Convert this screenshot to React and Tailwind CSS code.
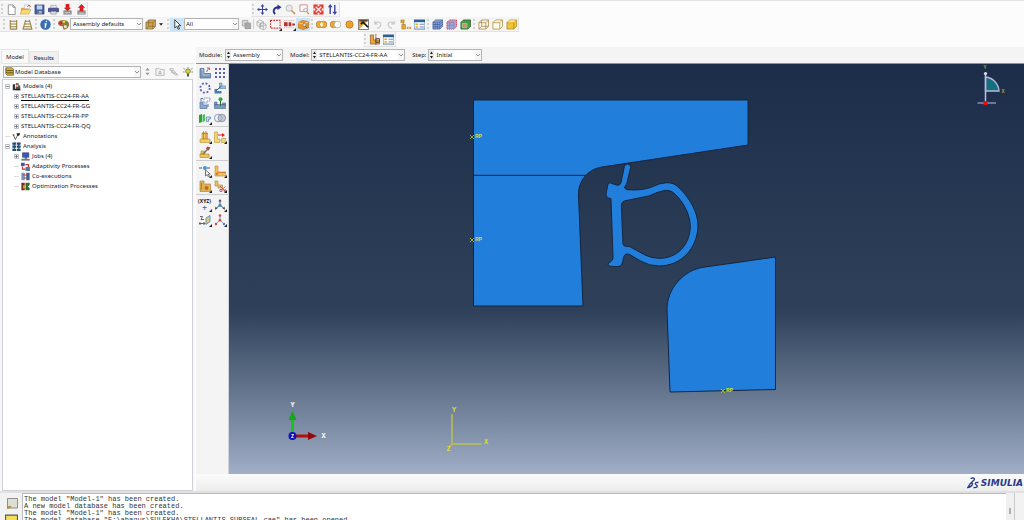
import { useState } from 'react';
import clsx from 'clsx';

const MODELS = ['STELLANTIS-CC24-FR-AA', 'STELLANTIS-CC24-FR-GG', 'STELLANTIS-CC24-FR-PP', 'STELLANTIS-CC24-FR-QQ'];

const MESSAGES = [
  'The model "Model-1" has been created.',
  'A new model database has been created.',
  'The model "Model-1" has been created.',
  'The model database "E:\\abaqus\\SULEKHA\\STELLANTIS SUBSEAL.cae" has been opened.',
];

// All glyphs are drawn on a 12x12 grid
const GLYPHS = {
  new: <path d="M2.5 1h5l2.5 2.5v8H2.5zM7.5 1v2.5H10" fill="#fff" stroke="#777" strokeWidth=".8" />,
  open: (
    <>
      <path d="M1 10V4h3l1 1h4v5z" fill="#e8a93a" />
      <path d="M0 11l2.5-5H12l-2.5 5z" fill="#ffd66b" stroke="#c98a22" strokeWidth=".5" />
      <path d="M5 1h5v4H5z" fill="#fff" stroke="#999" strokeWidth=".5" />
      <path d="M8 3l2-2 1.5 2" fill="none" stroke="#d33" />
    </>
  ),
  save: (
    <>
      <path d="M1 1h10v10H1z" fill="#3f5f9e" stroke="#2b4377" strokeWidth=".6" />
      <path d="M3 1.500h6V6H3z" fill="#c5d3ea" />
      <path d="M3.500 7.500h5v3h-5z" fill="#aab4c4" />
      <path d="M4.500 8v2" stroke="#222" />
    </>
  ),
  print: (
    <>
      <path d="M3 1.500h6V5H3z" fill="#e9ecf4" stroke="#777" strokeWidth=".5" />
      <rect x="0" y="4" width="12" height="5" rx="1" fill="#55588f" />
      <path d="M3 8h6v3H3z" fill="#dfe3f0" stroke="#666" strokeWidth=".5" />
    </>
  ),
  dbDown: (
    <>
      <path d="M1.500 7h9v4.500h-9z" fill="#8b8d92" />
      <path d="M3 9.500h6" stroke="#ddd" />
      <path d="M4 0h4v4h2L6 8 2 4h2z" fill="#d81e1e" />
    </>
  ),
  dbUp: (
    <>
      <path d="M1.500 7h9v4.500h-9z" fill="#8b8d92" />
      <path d="M3 10h6" stroke="#ddd" />
      <path d="M4 8h4V4h2L6 0 2 4h2z" fill="#d81e1e" />
    </>
  ),
  pan: (
    <>
      <path d="M6 2v8M2 6h8" stroke="#3a4299" strokeWidth="1.200" />
      <path d="M6 0l2 2.600H4zM6 12l2-2.600H4zM0 6l2.600-2v4zM12 6L9.400 4v4z" fill="#3a4299" />
    </>
  ),
  rotate: (
    <>
      <path d="M4.500 11C1.500 8 3 3.500 8 3.500" fill="none" stroke="#26308f" strokeWidth="2" />
      <path d="M7 .5l4.500 3L7 6.500z" fill="#26308f" />
    </>
  ),
  zoom: (
    <>
      <circle cx="4.500" cy="4.500" r="3.400" fill="#e9e9ea" stroke="#b9b9b9" />
      <path d="M7 7l4 4" stroke="#c98c35" strokeWidth="1.500" />
    </>
  ),
  zoomBox: (
    <>
      <path d="M1 1h8v7H1z" fill="#fff" stroke="#d06a62" strokeWidth=".8" />
      <circle cx="7" cy="6.500" r="2" fill="#eee" stroke="#999" strokeWidth=".7" />
      <path d="M8.500 8.500L11 11" stroke="#c98c35" strokeWidth="1.200" />
    </>
  ),
  fit: (
    <>
      <path d="M.5.5h11v11H.5z" fill="#e23a34" />
      <path d="M3 3l6 6M9 3L3 9" stroke="#fff" strokeWidth="1.300" />
      <path d="M5 .5h2v2H5zM5 9.500h2v2H5zM.5 5h2v2h-2zM9.500 5h2v2h-2z" fill="#fff" />
    </>
  ),
  cycle: (
    <>
      <path d="M3.500 2v9M8.500 1v9" stroke="#3a4299" strokeWidth="1.500" />
      <path d="M3.500 0L6 3.500H1zM8.500 12L6 8.500h5z" fill="#3a4299" />
    </>
  ),
  parallel: <path d="M2.500 1v10.500M9.500 1v10.500M2.500 2.500h7M2.500 5.500h7M2.500 8.500h7M2.500 11h7" fill="none" stroke="#9a8446" strokeWidth="1.200" />,
  perspective: <path d="M4 1L1 11.500M8 1l3 10.500M3.800 2.500h4.400M3 5.500h6M2 8.500h8M1.500 11h9" fill="none" stroke="#9a8446" strokeWidth="1.200" />,
  info: (
    <>
      <circle cx="6" cy="6" r="5.700" fill="#3a6eb2" />
      <path d="M5 5.500h1.500L5.500 9.500M7 2v1.600" fill="none" stroke="#fff" strokeWidth="1.500" />
    </>
  ),
  palette: (
    <>
      <path d="M0 4.500C0 0 11 0 12 5c.5 4-2 6.500-5.500 6.500-2 0 0-3-2-3.500S0 7 0 4.500z" fill="#a2743f" />
      <circle cx="3" cy="4.500" r="1.600" fill="#d22" />
      <circle cx="6.500" cy="3" r="1.400" fill="#f5d53c" />
      <circle cx="9.500" cy="5" r="1.400" fill="#3b9a3b" />
      <circle cx="8" cy="8.500" r="1.600" fill="#f2ede0" />
    </>
  ),
  cubeBrown: <path d="M1 4l3-3h7.500v7l-3 3H1zM1 4h7.500v7M8.500 4l3-3M4 1v7L1 11M4 8h7" fill="#c9a65c" stroke="#8d6c2e" strokeWidth=".8" />,
  cursor: <path d="M3 .8v9l2.200-2 1.500 3.500 1.500-.7-1.500-3.300H9.500z" fill="#fff" stroke="#222" strokeWidth=".9" />,
  overlap: (
    <>
      <path d="M1.500 1.500h6v6h-6z" fill="#d5d5d5" stroke="#aaa" />
      <path d="M4.500 4.500h6v6h-6z" fill="#a8a8a8" stroke="#999" />
    </>
  ),
  wireGhost: <path d="M1 3l3-2 4 2v4L5 9 1 7zM4 6l3-2 4 2v4l-3 2-4-2zM1 3l4 2v4M5 5l3-2M4 6l4 2v4M8 8l3-2" fill="none" stroke="#999" strokeWidth=".7" />,
  dashBox: <path d="M.5 1.500h10.500v8.500H.5z" fill="none" stroke="#d03a35" strokeWidth="1.200" strokeDasharray="2 1" />,
  dashDots: (
    <>
      <path d="M0 1.500h11M0 9.500h11" stroke="#e0a0a0" strokeDasharray="1 1" />
      <path d="M0 3.500h4V8H0zM5 3.500h3V8H5zM9 5h3v2H9z" fill="#b9302a" />
    </>
  ),
  cubePick: (
    <>
      <path d="M0 4l5-2.500L11.500 3v6.500l-6 2L0 9.500z" fill="#ea9327" stroke="#9b5f19" strokeWidth=".6" />
      <path d="M0 4l5.500 1.500 6-2.500" fill="none" stroke="#ffd592" />
      <circle cx="7" cy="6.500" r="1.800" fill="#ddd" stroke="#555" strokeWidth=".6" />
      <path d="M8 8l2 2" stroke="#555" />
    </>
  ),
  union: (
    <>
      <circle cx="3.800" cy="6" r="3.600" fill="#f2a92d" stroke="#9a7740" strokeWidth=".7" />
      <circle cx="8.200" cy="6" r="3.600" fill="#f2a92d" stroke="#9a7740" strokeWidth=".7" />
      <path d="M6 3.200a3.400 3.400 0 0 1 0 5.600 3.400 3.400 0 0 1 0-5.600z" fill="#fff" />
    </>
  ),
  subtract: (
    <>
      <circle cx="3.800" cy="6" r="3.600" fill="#f2a92d" stroke="#9a7740" strokeWidth=".7" />
      <circle cx="8.200" cy="6" r="3.600" fill="#fff" stroke="#999" strokeWidth=".7" />
    </>
  ),
  circle: <circle cx="6" cy="6" r="4" fill="#eea02a" stroke="#a0701d" strokeWidth=".7" />,
  invert: (
    <>
      <path d="M.5.5h11v11H.5z" fill="#fff" stroke="#333" strokeWidth=".7" />
      <path d="M1 11.500V1h10.500z" fill="#efa632" />
      <path d="M3 5.500l2.500-2L11 9" fill="none" stroke="#111" strokeWidth="1.800" />
      <path d="M1.500 2h9" stroke="#222" strokeWidth="1.200" />
    </>
  ),
  undo: <path d="M3 2v3.500h3.500M3 5.500C5 2 11 3 9.500 7c-.5 2-2 3-4 3" fill="none" stroke="#c3c3c3" strokeWidth="1.100" />,
  redo: <path d="M9 2v3.500H5.500M9 5.500C7 2 1 3 2.500 7c.5 2 2 3 4 3" fill="none" stroke="#c3c3c3" strokeWidth="1.100" />,
  tree: (
    <>
      <path d="M1 1h3.500v3H1zM2 6h4v5H2z" fill="#e8a736" stroke="#a87522" strokeWidth=".6" />
      <path d="M3.500 4v3" stroke="#a87522" />
      <path d="M7.500 8.500h1.800v2.500H7.500zM10.200 8.500H12v2.500h-1.800z" fill="#d98f30" />
    </>
  ),
  table: (
    <>
      <path d="M0 1h12v10H0z" fill="#fff" stroke="#335b86" strokeWidth=".8" />
      <path d="M0 1h12v2.500H0z" fill="#2e5f93" />
      <path d="M1.500 5h3v1.500h-3zM1.500 8h3v1.500h-3z" fill="#e6a535" />
      <path d="M6 5.700h5M6 8.700h5" stroke="#5a86b3" />
    </>
  ),
  meshBlue: (
    <>
      <path d="M1 3.500L4 1h7.500v7l-3 3H1z" fill="#8da6d8" stroke="#33508f" strokeWidth=".7" />
      <path d="M1 3.500h7.500V11M8.500 3.500l3-2.500M3.500 3.500V11M6 3.500V11M1 6h7.500l3-2.500M1 8.500h7.500l3-2.500" fill="none" stroke="#33508f" strokeWidth=".6" />
    </>
  ),
  meshRed: (
    <>
      <path d="M1 3.500L4 1h7.500v7l-3 3H1z" fill="#9aabdc" stroke="#d8334f" strokeDasharray="1.500 .7" />
      <path d="M1 3.500h7.500V11M4 3.500V11M1 7h7.500" fill="none" stroke="#c05a80" strokeWidth=".6" />
    </>
  ),
  meshGreen: (
    <>
      <path d="M1 3.500L4 1h7.500v7l-3 3H1z" fill="#4d9a45" stroke="#27552a" strokeWidth=".8" />
      <path d="M2.500 5h5v4.500h-5z" fill="#d98578" stroke="#8fdd77" />
    </>
  ),
  cubeWire: <path d="M1 4l3-3h7.500v7l-3 3H1zM1 4h7.500v7M8.500 4l3-3M4 1v7L1 11M4 8h7.500" fill="none" stroke="#b3924a" strokeWidth=".9" />,
  cubeHidden: <path d="M1 4l3-3h7.500v7l-3 3H1zM1 4h7.500v7M8.500 4l3-3" fill="#fffbea" stroke="#b3924a" strokeWidth=".9" />,
  cubeSolid: (
    <>
      <path d="M1 4l3-3h7.500v7l-3 3H1z" fill="#f2c433" stroke="#a17a1d" strokeWidth=".7" />
      <path d="M1 4h7.500v7M8.500 4l3-3" fill="none" stroke="#a17a1d" strokeWidth=".7" />
      <path d="M1.500 3.800l3-2.500H11L8.500 3.800z" fill="#ffe687" />
    </>
  ),
  section: (
    <>
      <path d="M1.500 1H5v5.500h6.500v4.500h-10z" fill="#e9a53a" stroke="#805516" strokeWidth=".7" />
      <path d="M7.500 0v12" stroke="#c22" strokeWidth=".8" />
      <path d="M7.500 5h4v4h-4z" fill="none" stroke="#444" />
    </>
  ),
  database: (
    <>
      <path d="M1 1h8.500l2 2v8H3L1 9z" fill="#d6b23c" stroke="#4f431a" strokeWidth=".8" />
      <path d="M1 3.500l2 1.300h8M1 6.500l2 1.300h8" fill="none" stroke="#4f431a" strokeWidth="1.200" />
    </>
  ),
  spin: <path d="M6 1l3 3.500H3zM6 11L3 7.500h6z" fill="#999" />,
  folderUp: (
    <>
      <path d="M1 2h4l1 1h5v7H1z" fill="#f4f4f4" stroke="#aaa" strokeWidth=".9" />
      <path d="M4 8h4M6 8V5L4.500 6.500M6 5l1.500 1.500" fill="none" stroke="#999" strokeWidth=".8" />
    </>
  ),
  filter: <path d="M1 2h4v2H1zM3 5h4v2H3zM5 8h4v2M7 6l4 4M2 4l7 7" fill="none" stroke="#b8aeb0" strokeWidth=".9" />,
  bulb: (
    <>
      <circle cx="6" cy="5" r="2.800" fill="#d9d24a" stroke="#5b6a2c" strokeWidth=".9" />
      <path d="M4.800 8h2.400v3.500H4.800z" fill="#4d5f3c" />
      <path d="M.5 1.500L2.500 3M11.500 1.500L9.500 3M6 0v1.500M0 6h2M10 6h2" stroke="#667a35" strokeWidth=".9" />
    </>
  ),
  models: (
    <>
      <path d="M1 3h3v8H1z" fill="#333" />
      <path d="M5 6h3v5H5zM8 4l3 1v6H8z" fill="#555" />
      <path d="M4 11h7V9H4z" fill="#222" />
      <circle cx="6.500" cy="3" r="1.600" fill="#c33" />
      <path d="M8.500 1v4" stroke="#4a9a5a" />
    </>
  ),
  annot: (
    <>
      <path d="M2 4l2.500 6L8 3" fill="none" stroke="#333" strokeWidth="1" />
      <path d="M6 1.500h5L9.500 5H7z" fill="#222" />
      <path d="M1 3h2v2H1z" fill="#555" />
    </>
  ),
  analysis: (
    <>
      <path d="M3 1v10M9 1v10" stroke="#2e6a92" strokeWidth="1.500" />
      <path d="M.5.5h5v3h-5zM.5 4.700h5v3h-5zM.5 9h5v3h-5zM6.500.5h5v3h-5zM6.500 4.700h5v3h-5zM6.500 9h5v3h-5z" fill="#1f4c70" />
    </>
  ),
  jobs: (
    <>
      <path d="M2 1h8.500v6H2z" fill="#3157ca" stroke="#444" strokeWidth=".8" />
      <path d="M.5 9h11v2.500H.5z" fill="#777" />
      <path d="M5 7h3v2H5z" fill="#555" />
    </>
  ),
  adapt: (
    <>
      <path d="M0 1h5v4.500H0z" fill="#3e5d9c" />
      <path d="M6 3.500h4V7" fill="none" stroke="#c33" strokeWidth="1.500" />
      <path d="M2 6v3.500h4" fill="none" stroke="#c33" strokeWidth="1.500" />
      <path d="M6 6.500h6V12H6z" fill="#5678a8" />
    </>
  ),
  coexec: (
    <>
      <path d="M.5 1H5v10H.5z" fill="#7a91bd" />
      <path d="M7 1h4.500v10H7z" fill="#3e5f99" />
      <path d="M3 4h5M4 8h5" stroke="#c0392b" strokeWidth="1.500" />
    </>
  ),
  optim: (
    <>
      <path d="M.5 1H5v10H.5z" fill="#7b2f22" />
      <path d="M6 1h5.500v3L9 6l2.500 2v3H6z" fill="#2c6e2c" />
      <path d="M3 4l4 2-4 3z" fill="#e9b82e" />
    </>
  ),
  msg: (
    <>
      <path d="M1.500.5h10V10h-10z" fill="#dedfd4" stroke="#777" strokeWidth=".8" />
      <path d="M.5 11.500l2.500-4L6 9z" fill="#b98a25" />
    </>
  ),
  prompt: <path d="M.5 1h11v10H.5z" fill="#f2df55" stroke="#555" />,
  // toolbox
  instance: (
    <>
      <path d="M1 1.500h4V6.500h6.500V11H1z" fill="#7d9ac2" stroke="#4a658f" strokeWidth=".7" />
      <path d="M2 2.500h2V8h7" fill="none" stroke="#b8cbe4" strokeWidth=".8" />
      <path d="M7.500 5L9.500 1.500M8 1h2.500v2" fill="none" stroke="#cc4444" strokeWidth=".9" />
    </>
  ),
  dots: (
    <path d="M1 1h2v2H1zM5 1h2v2H5zM9 1h2v2H9zM1 5h2v2H1zM5 5h2v2H5zM9 5h2v2H9zM1 9h2v2H1zM5 9h2v2H5zM9 9h2v2H9z" fill="#5a5fae" />
  ),
  ring: <circle cx="6" cy="6" r="4.700" fill="none" stroke="#5a5fae" strokeWidth="1.800" strokeDasharray="1.900 1.790" />,
  translate: (
    <>
      <path d="M5.500 1h2.500v3h4v2.500H5.500z" fill="#9cc0da" stroke="#5083a6" strokeWidth=".6" />
      <path d="M.5 7H3v2h4.500v2.500h-7z" fill="#4a7eb0" />
      <path d="M2.500 8.500l5-4.500" stroke="#2a5484" />
    </>
  ),
  rotateInst: (
    <>
      <path d="M1 5h3v3h4v3.500H1z" fill="#8eaad0" stroke="#55759f" strokeWidth=".7" />
      <path d="M5 1h6v3H8v2H5z" fill="#fff" stroke="#5a79a8" strokeWidth=".8" strokeDasharray="1.500 .7" />
      <path d="M2 4V1.500h2M9 10V7" fill="none" stroke="#55759f" />
    </>
  ),
  anchor: (
    <>
      <path d="M.5 7.500h11v4H.5zM.5 5H3v3H.5zM8.500 6h3v2h-3z" fill="#7d9ac2" stroke="#4a658f" strokeWidth=".6" />
      <path d="M6.500 3v6" stroke="#2b6f2b" />
      <circle cx="6.500" cy="2.300" r="2" fill="#32a33b" />
    </>
  ),
  constrain: (
    <>
      <path d="M0 3l3-1v8l-3 1z" fill="#2aa13a" />
      <path d="M3.500 3l2.500-1v7l-2.500 1z" fill="#4cc058" />
      <path d="M7.500 5h4v2h-2v2.500h-2z" fill="#dce6f2" stroke="#5b80b0" strokeWidth=".8" />
    </>
  ),
  merge: (
    <>
      <circle cx="4.200" cy="6" r="3.800" fill="#eef1f6" stroke="#7f8ba1" strokeWidth=".8" />
      <circle cx="7.800" cy="6" r="3.800" fill="#9fabc0" fillOpacity=".6" stroke="#7f8ba1" strokeWidth=".8" />
    </>
  ),
  partStack: (
    <>
      <path d="M1 8h10v3.500H1zM3 2h5.500v6H3z" fill="#f3ce62" stroke="#b78a36" strokeWidth=".6" />
      <path d="M4.500 0v8M7 0v8M3 2.500h5.500" stroke="#c8683c" strokeWidth=".8" />
    </>
  ),
  partMove: (
    <>
      <path d="M.5 1h3v7H6v3.500H.5z" fill="#f3d56e" stroke="#b79436" strokeWidth=".6" />
      <path d="M4 4h4" stroke="#d22" />
      <path d="M8 2l3 2-3 2z" fill="#d22" />
      <path d="M7.500 7.500H12v4H7.500z" fill="#ead77e" stroke="#a78420" strokeWidth=".5" />
    </>
  ),
  partEdit: (
    <>
      <path d="M1 8h9v3.500H1zM2 5h4v3H2z" fill="#ecc65a" stroke="#a78430" strokeWidth=".6" />
      <path d="M4 8l5-5" stroke="#777" strokeWidth="1.400" />
      <path d="M8 .5l3.500 1L9.500 4.500 7 3z" fill="#b5473d" />
    </>
  ),
  pickLine: (
    <>
      <path d="M0 3h11" stroke="#555" strokeDasharray="3 1" />
      <circle cx="6" cy="3" r="1.900" fill="#4592d8" />
      <path d="M6.500 5v6l1.700-1.500 1.300 2.500 1-.5-1.200-2.500h1.900z" fill="#fff" stroke="#555" strokeWidth=".8" />
    </>
  ),
  partEdge: (
    <>
      <path d="M1 1h3v6h8v4H1z" fill="#f2c45a" stroke="#b98430" strokeWidth=".6" />
      <path d="M3 7.500h9" stroke="#e0802a" />
      <circle cx="3" cy="9" r="1.200" fill="#dc7a2c" />
    </>
  ),
  partCell: (
    <>
      <path d="M1 1h4v3h6.500v7.500H1z" fill="#dfb457" stroke="#9f752e" strokeWidth=".6" />
      <circle cx="7.500" cy="8" r="2" fill="#c8632c" />
      <path d="M2.500 3v7" stroke="#a8822e" />
    </>
  ),
  partCut: (
    <>
      <path d="M1 1h3v4h4.500v3H4V6H1z" fill="#ecc066" stroke="#ad8038" strokeWidth=".6" />
      <path d="M6 6l5 5M11.500 6.500L7.500 10" stroke="#b55" strokeWidth=".9" />
      <circle cx="7" cy="10.500" r="1.200" fill="none" stroke="#a33" strokeWidth=".8" />
      <circle cx="11" cy="10.800" r="1" fill="none" stroke="#a33" strokeWidth=".8" />
    </>
  ),
  datumAxis: (
    <>
      <path d="M6 6V1M6 6l-4.500 4M6 6l4.500 4" stroke="#4c5f76" strokeWidth="1" />
      <path d="M6 0l1.500 2.500h-3zM1 10.500l.5-3 2 2zM11 10.500l-.5-3-2 2z" fill="#445" />
      <circle cx="6" cy="6.300" r="1.600" fill="#3f8fc4" />
    </>
  ),
  datumPlane: (
    <>
      <path d="M1 2.500h2.500L2 5.500h3M0 9.500h6M1.500 8L0 9.500 1.500 11M4.500 8L6 9.500 4.500 11" fill="none" stroke="#444" strokeWidth=".8" />
      <path d="M7 4l4-2.500v6L7 10.500z" fill="#e6c67a" stroke="#5c91bb" strokeWidth=".9" />
    </>
  ),
  csys: (
    <>
      <path d="M6 6V1.500M6 6l-4 4M6 6l4 4" stroke="#7ba3c8" strokeWidth="1" />
      <circle cx="6" cy="1.500" r="1.200" fill="#c44" />
      <circle cx="2" cy="10" r="1.200" fill="#c44" />
      <circle cx="10" cy="10" r="1.200" fill="#3b83c9" />
      <circle cx="6" cy="6.300" r="1.300" fill="#c44" />
    </>
  ),
};

function Glyph({ name, className = 'size-[11px]' }) {
  return (
    <svg viewBox="0 0 12 12" className={clsx('shrink-0', className)} aria-hidden="true">
      {GLYPHS[name]}
    </svg>
  );
}

function ToolButton({ name, active, menu }) {
  return (
    <button
      type="button"
      aria-label={name}
      className={clsx('relative flex h-[13px] w-3.5 shrink-0 items-center justify-center hover:bg-[#d8eafa]', active && 'bg-[#cce4f7]')}
    >
      <Glyph name={name} className="size-[11px]" />
      {menu && <Corner />}
    </button>
  );
}

// Small triangle that marks a button with a fly-out
function Corner() {
  return (
    <svg viewBox="0 0 3 3" className="absolute right-0 bottom-0 size-[3px]" aria-hidden="true">
      <path d="M3 0v3H0z" fill="#222" />
    </svg>
  );
}

function Grip() {
  return <span className="mx-px h-2.5 w-0 shrink-0 border-l-2 border-dotted border-[#d2d2d2]" />;
}

function Toolbar({ className, children }) {
  return <div className={clsx('flex h-[15px] items-center border-r border-b border-[#e2e2e2] bg-[#f5f5f5]', className)}>{children}</div>;
}

function Combo({ label, value, className, selectClass = 'pl-px', spinner }) {
  return (
    <span className={clsx('relative flex h-3 items-center border border-[#b4b4b4] bg-white', className)}>
      {spinner && (
        <svg viewBox="0 0 5 10" className="h-2.5 w-[5px] shrink-0 bg-[#ececec]" aria-hidden="true">
          <path d="M2.500 1.500L4 4H1zM2.500 8.500L1 6h3z" fill="#222" />
        </svg>
      )}
      <select aria-label={label} defaultValue={value} className={clsx('h-full w-full appearance-none bg-transparent leading-[10px] outline-none', selectClass)}>
        <option>{value}</option>
      </select>
      <svg viewBox="0 0 6 10" className="pointer-events-none absolute inset-y-0 right-0 h-full w-[6px] bg-[#f6f6f6]" aria-hidden="true">
        <path d="M1 4l2 2 2-2" fill="none" stroke="#777" strokeWidth=".8" />
      </svg>
    </span>
  );
}

function Toolbars() {
  return (
    <header className="flex flex-col border-t border-[#e3e3e3] bg-[#fcfcfc] pt-px">
      <div className="flex items-start">
        <Toolbar className="w-[88px]">
          <Grip />
          {['new', 'open', 'save', 'print', 'dbDown', 'dbUp'].map((n) => <ToolButton key={n} name={n} />)}
        </Toolbar>
        <Toolbar className="ml-[163px]">
          <Grip />
          {['pan', 'rotate', 'zoom', 'zoomBox', 'fit', 'cycle'].map((n) => <ToolButton key={n} name={n} />)}
        </Toolbar>
      </div>
      <div className="flex">
        <Toolbar className="pl-0.5">
          <Grip />
          <ToolButton name="parallel" />
          <ToolButton name="perspective" />
          <Grip />
          <ToolButton name="info" />
          <Grip />
          <ToolButton name="palette" />
          <Combo label="Color code" value="Assembly defaults" className="w-[73px]" selectClass="pl-0.5" />
          <ToolButton name="cubeBrown" />
          <svg viewBox="0 0 6 4" className="ml-0.5 h-[3px] w-1 shrink-0" aria-hidden="true">
            <path d="M0 0h6L3 3.500z" fill="#111" />
          </svg>
          <span className="w-[3px]" />
          <Grip />
          <ToolButton name="cursor" active />
          <Combo label="Selection filter" value="All" className="w-[55px]" />
          <ToolButton name="overlap" />
          <span className="h-2.5 w-px bg-[#cfcfcf]" />
          <ToolButton name="wireGhost" />
          <ToolButton name="dashBox" menu />
          <ToolButton name="dashDots" menu />
          <ToolButton name="cubePick" active />
          <Grip />
          {['union', 'subtract', 'circle', 'invert', 'undo', 'redo', 'tree', 'table'].map((n) => <ToolButton key={n} name={n} />)}
          <Grip />
          {['meshBlue', 'meshRed', 'meshGreen'].map((n) => <ToolButton key={n} name={n} />)}
          <Grip />
          {['cubeWire', 'cubeHidden', 'cubeSolid'].map((n) => <ToolButton key={n} name={n} />)}
        </Toolbar>
      </div>
      <div className="flex">
        <Toolbar className="ml-[363px]">
          <Grip />
          <ToolButton name="section" />
          <ToolButton name="table" />
        </Toolbar>
      </div>
    </header>
  );
}

function Expander({ open }) {
  return (
    <button type="button" aria-label={open ? 'Collapse' : 'Expand'} className="mx-px size-[5px] shrink-0">
      <svg viewBox="0 0 5 5" className="size-[5px]">
        <path d="M.5.5h4v4h-4z" fill="#fff" stroke="#a9b0bb" strokeWidth=".8" />
        <path d={open ? 'M1 2.500h3' : 'M1 2.500h3M2.500 1v3'} stroke="#556" strokeWidth=".7" />
      </svg>
    </button>
  );
}

function TreeRow({ level = 0, icon, label, expander, open, underline }) {
  return (
    <li className={clsx('flex h-2.5 items-center whitespace-nowrap', level ? 'pl-[9px]' : 'pl-0')}>
      {expander ? <Expander open={open} /> : <span className="mx-px h-px w-[5px] shrink-0 bg-[#ddd]" />}
      {icon && <Glyph name={icon} className="mr-0.5 ml-px size-[9px]" />}
      <span className={clsx('leading-[8px]', underline && 'border-b border-black', !icon && 'ml-px')}>{label}</span>
    </li>
  );
}

function ModelPanel() {
  const [tab, setTab] = useState('Model');

  return (
    <aside className="flex w-[194px] shrink-0 flex-col bg-[#f7f7f7] pl-px">
      <div className="flex h-4 items-end bg-[#fcfcfc]" role="tablist">
        {['Model', 'Results'].map((name) => (
          <button
            key={name}
            type="button"
            role="tab"
            aria-selected={tab === name}
            onClick={() => setTab(name)}
            className={clsx('border border-b-0 border-[#e4e4e4] px-1', tab === name ? 'h-[14px] bg-[#f9f9f9]' : 'h-3 bg-[#f0f0f0]')}
          >
            {name}
          </button>
        ))}
      </div>
      <div className="flex h-4 items-center border-t border-[#e4e4e4] pl-0.5">
        <span className="flex h-3 items-center border border-r-0 border-[#b4b4b4] bg-white pl-px">
          <Glyph name="database" className="size-[9px]" />
        </span>
        <Combo label="Tree" value="Model Database" className="w-[127px] border-l-0" />
        <Glyph name="spin" className="ml-0.5 size-[9px]" />
        <Glyph name="folderUp" className="ml-[3px] size-[10px]" />
        <Glyph name="filter" className="ml-1 size-[10px]" />
        <Glyph name="bulb" className="ml-1 size-[10px]" />
      </div>
      <ul className="mx-px flex-1 border border-[#cfd1d6] bg-white pt-px pl-px">
        <TreeRow icon="models" label="Models (4)" expander open />
        {MODELS.map((m, i) => <TreeRow key={m} level={1} label={m} expander underline={i === 0} />)}
        <TreeRow icon="annot" label="Annotations" />
        <TreeRow icon="analysis" label="Analysis" expander open />
        <TreeRow level={1} icon="jobs" label="Jobs (4)" expander />
        <TreeRow level={1} icon="adapt" label="Adaptivity Processes" />
        <TreeRow level={1} icon="coexec" label="Co-executions" />
        <TreeRow level={1} icon="optim" label="Optimization Processes" />
      </ul>
    </aside>
  );
}

function ContextBar() {
  return (
    <div className="flex h-[17px] items-center border-b border-[#8d929a] bg-[#f4f4f4] pb-px pl-[3px]">
      <span>Module:</span>
      <Combo label="Module" value="Assembly" className="ml-[3px] w-[58px]" selectClass="pl-0.5" spinner />
      <span className="ml-[7px]">Model:</span>
      <Combo label="Model" value="STELLANTIS-CC24-FR-AA" className="ml-0.5 w-[94px]" selectClass="pl-0.5" spinner />
      <span className="ml-[7px]">Step:</span>
      <Combo label="Step" value="Initial" className="ml-0.5 w-[54px]" selectClass="pl-0.5" spinner />
    </div>
  );
}

function Toolbox() {
  const groups = [
    ['instance', 'dots', 'ring', 'translate', 'rotateInst', 'anchor', 'constrain', 'merge'],
    ['partStack', 'partMove', 'partEdit'],
    ['pickLine', 'partEdge', 'partCell', 'partCut'],
    ['xyz', 'datumAxis', 'datumPlane', 'csys'],
  ];
  const plain = ['instance', 'dots', 'ring', 'translate', 'rotateInst', 'anchor', 'merge'];

  return (
    <div className="flex w-[33px] shrink-0 flex-col gap-0.5 border-r border-[#d0d3d8] bg-[#f4f4f4] pt-px">
      {groups.map((group) => (
        <div key={group[0]} className="grid grid-cols-2 border-b border-[#cdcdcd] px-px pb-px last:border-b-0">
          {group.map((n) => (
            <button key={n} type="button" aria-label={n} className="relative flex h-[15px] items-center justify-center hover:bg-[#d8eafa]">
              {n === 'xyz' ? (
                <span className="flex flex-col items-center text-[5px] leading-[5px] font-bold">
                  (XYZ)
                  <span className="text-[8px] leading-[7px] text-[#2f7fc9]">+</span>
                </span>
              ) : (
                <Glyph name={n} className="size-[12px]" />
              )}
              {!plain.includes(n) && <Corner />}
            </button>
          ))}
        </div>
      ))}
    </div>
  );
}

function RefPoint({ x, y }) {
  return (
    <g>
      <path d={`M${x - 2} ${y - 2}l4 4M${x + 2} ${y - 2}l-4 4`} stroke="#c3c51f" strokeWidth=".8" />
      <text x={x + 3} y={y + 1} fill="#c9dc3a" fontSize="6" fontWeight="bold">RP</text>
    </g>
  );
}

function Viewport() {
  return (
    <div className="min-w-0 flex-1 overflow-hidden bg-linear-to-b from-[#1c2d49] via-[#2f415a] via-60% to-[#a0aec6]">
      <svg
        viewBox="229 64 795 410"
        preserveAspectRatio="xMidYMid slice"
        className="block h-full w-full font-['Liberation_Mono',monospace]"
        role="img"
        aria-label="Assembly view"
      >
        {/* Parts */}
        <g fill="#217edb" stroke="#14263f" strokeWidth="1">
          <path d="M473.500 100H748v45L602 167C588 169 578 181 578.500 195L583 306H473.500z" />
          <path d="M473.500 175.300H586" fill="none" />
          <path d="M775.500 257L705 267c-20 2-38.500 21-38 43l3 82 105.500-2.500z" />
          <path
            transform="translate(570 150) scale(.3333)"
            strokeWidth="3"
            fillRule="evenodd"
            d="M172 42Q182 42 182 52L170 102Q157 116 172 119Q215 123 245 111Q270 99 290 98Q312 98 325 111C362 147 384 188 384 228C382 295 335 347 268 348Q237 348 212 333L178 313Q163 308 160 325Q158 350 142 350L120 349Q110 346 116 338Q129 334 129 322L123 146Q108 144 108 132L114 102Q119 95 127 101L143 106Q150 106 153 98L163 50Q166 42 172 42ZM172 151L240 137Q270 122 290 121Q305 121 316 133C345 162 361 198 361 230C359 285 322 325 268 325Q245 325 225 315L185 293Q178 288 170 289Q160 290 159 282L154 165Q155 153 172 151Z"
          />
        </g>
        <RefPoint x={472} y={137} />
        <RefPoint x={472} y={240} />
        <RefPoint x={723} y={391} />

        {/* View triad */}
        <path d="M292.500 434V417" stroke="#16c41a" strokeWidth="3" />
        <path d="M292.500 411l4 9h-8z" fill="#12a716" />
        <path d="M294 436h16" stroke="#b80d0d" strokeWidth="3" />
        <path d="M317 436l-9-4v8z" fill="#930808" />
        <circle cx="292.500" cy="436" r="4" fill="#0b12b8" />
        <g fill="#fff" fontSize="7" fontWeight="bold" textAnchor="middle">
          <text x="292.500" y="407">Y</text>
          <text x="323.500" y="438">X</text>
          <text x="292.500" y="438" fontSize="5">Z</text>
        </g>

        {/* Global axes */}
        <path d="M452 414v30h29.500M452 444l-3 3" fill="none" stroke="#bcc04f" strokeWidth="1.500" />
        <g fill="#dddc2e" fontSize="7" fontWeight="bold" textAnchor="middle">
          <text x="454" y="412">Y</text>
          <text x="486" y="444">X</text>
          <text x="448.500" y="451">Z</text>
        </g>

        {/* Compass */}
        <path d="M985.500 77c8 1 13 7 13.500 14h-13.500z" fill="#14707a" stroke="#b9b7de" strokeWidth="1.300" />
        <path d="M985.500 73v30" stroke="#c5bde8" strokeWidth="1.500" />
        <path d="M977.500 103H996" stroke="#8f89b8" strokeWidth="1.500" />
        <circle cx="985.500" cy="73.500" r="1.600" fill="#e4dcf8" />
        <path d="M983.500 101h4v4h-4z" fill="#e01010" />
        <g fill="#a9a532" fontSize="5" fontWeight="bold" textAnchor="middle">
          <text x="985" y="69">Y</text>
          <text x="1003" y="93">X</text>
        </g>
      </svg>
    </div>
  );
}

function BrandStrip() {
  return (
    <div className="flex h-[17px] shrink-0 items-center justify-end gap-0.5 bg-linear-to-b from-[#fbfbfb] to-[#ededed] pr-px">
      <svg viewBox="0 0 12 12" className="size-[12px]" aria-hidden="true">
        <path d="M3.500 1.500C6 .5 8.500 1 7 3L2.500 7.500M4.500 6C7 6.500 4.500 10 .8 10.500L3 7M11.500 5.500C8 5 7.500 6.500 9.500 8s0 3-3 2.500" fill="none" stroke="#263a8c" strokeWidth="1.300" />
      </svg>
      <span className="font-['DejaVu_Sans',sans-serif] text-[9px] leading-3 font-bold text-[#263a8c] italic">SIMULIA</span>
    </div>
  );
}

function MessageArea() {
  return (
    <footer className="flex h-[29px] shrink-0 overflow-hidden border-t-2 border-[#e0e0e0] bg-[#f2f2f2] pl-px">
      <div className="flex w-[21px] shrink-0 flex-col items-center pt-[5px]">
        <button type="button" aria-label="Message area"><Glyph name="msg" className="block size-[12px]" /></button>
        <button type="button" aria-label="Command line" className="mt-1"><Glyph name="prompt" className="block size-[13px]" /></button>
      </div>
      <div className="min-w-0 flex-1 border-t border-l border-[#bbb] bg-white pt-0.5 pl-px font-['Liberation_Mono',monospace] text-[7px] leading-[7px] text-[#333]">
        {MESSAGES.map((m, i) => <p key={i} className="whitespace-nowrap">{m}</p>)}
      </div>
      <div className="flex w-[9px] shrink-0 justify-center border-r border-[#c8c8c8] bg-[#f0f0f0] pt-[15px]">
        <span className="h-1.5 w-0.5 bg-[#b0b0b0]" />
      </div>
      <div className="w-[9px] shrink-0" />
    </footer>
  );
}

export default function App() {
  return (
    <div className="flex h-screen flex-col overflow-hidden bg-[#fcfcfc] font-['Noto_Sans','Open_Sans',sans-serif] text-[6px] leading-[10px] text-[#1a1a1a]">
      <Toolbars />
      <main className="flex min-h-0 flex-1">
        <ModelPanel />
        <div className="ml-0.5 flex min-w-0 flex-1 flex-col">
          <ContextBar />
          <div className="flex min-h-0 flex-1">
            <Toolbox />
            <Viewport />
          </div>
          <BrandStrip />
        </div>
      </main>
      <MessageArea />
    </div>
  );
}
